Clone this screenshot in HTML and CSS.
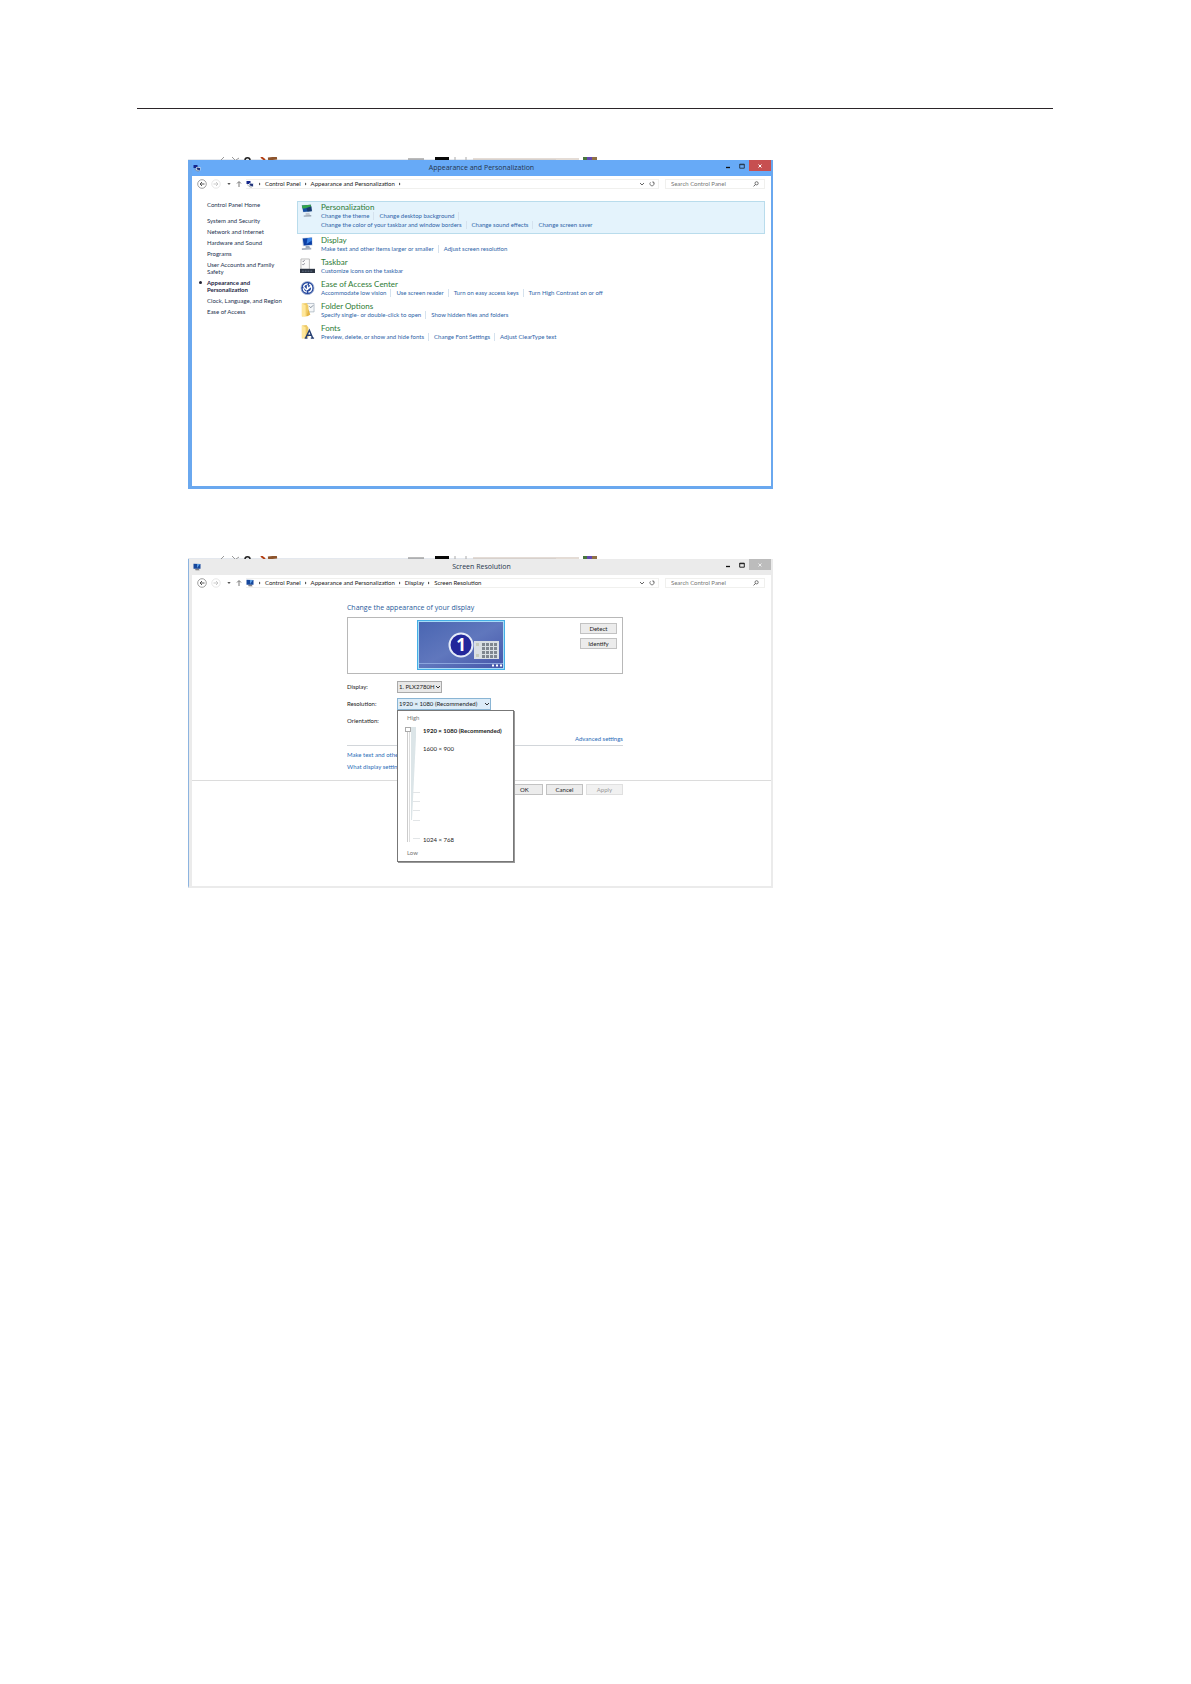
FILE: index.html
```html
<!DOCTYPE html>
<html lang="en">
<head>
<meta charset="utf-8">
<title>Display settings guide</title>
<link rel="stylesheet" href="styles.css">
</head>
<body>
<svg class="sprite" aria-hidden="true">
  <symbol id="back" viewBox="0 0 10 10"><circle cx="5" cy="5" r="4.3" fill="#fff" stroke="#888" stroke-width=".8"/><path d="M7.500 5H3M5 3L3 5l2 2" fill="none" stroke="#555" stroke-width="1"/></symbol>
  <symbol id="forward" viewBox="0 0 10 10"><circle cx="5" cy="5" r="4.2" fill="#fff" stroke="#ddd" stroke-width=".7"/><path d="M2.500 5H7M5 3l2 2-2 2" fill="none" stroke="#bbb" stroke-width=".8"/></symbol>
  <symbol id="caret" viewBox="0 0 4 4"><path d="M.3 1h3.400L2 3z" fill="#555"/></symbol>
  <symbol id="up" viewBox="0 0 6 8"><path d="M3 7V2M1 3.500l2-2 2 2" fill="none" stroke="#666" stroke-width=".9"/></symbol>
  <symbol id="chevron" viewBox="0 0 4 6"><path d="M1 1.500l1.500 1.500L1 4.500z" fill="#444"/></symbol>
  <symbol id="down" viewBox="0 0 6 6"><path d="M1 2l2 2 2-2" fill="none" stroke="#666" stroke-width="1"/></symbol>
  <symbol id="refresh" viewBox="0 0 6 6"><path d="M4.500 1.300a2.100 2.100 0 1 1-3 0M3.200 1h1.600v1.600" fill="none" stroke="#666" stroke-width=".8"/></symbol>
  <symbol id="search" viewBox="0 0 6 6"><circle cx="3.600" cy="2.300" r="1.600" fill="none" stroke="#555" stroke-width=".8"/><path d="M2.500 3.400L.6 5.400" stroke="#555" stroke-width=".9"/></symbol>
  <symbol id="pair" viewBox="0 0 8 8"><path d="M.5 1h4v3h-4z" fill="#14278c"/><path d="M3 3h4.500v3.500H3z" fill="#ccd8e8"/><path d="M3.500 3.500l3.500.5v2.500l-3-1z" fill="#25357a"/><path d="M1 4.500l3 2.500h2" stroke="#888" stroke-width=".6" fill="none"/></symbol>
  <symbol id="monitor" viewBox="0 0 8 8"><path d="M.5.8l7 .2v4.700H.5z" fill="#16479c"/><path d="M4 1h3L4 5z" fill="#5b9ce2"/><path d="M3 5.700h3v1H2z" fill="#556"/><path d="M2.500 7h4" stroke="#888" stroke-width=".7"/></symbol>
</svg>
<main class="page">
  <hr class="rule">

  <section class="shot">
    <svg class="sliver" viewBox="0 0 585 3" preserveAspectRatio="xMinYMin slice" aria-hidden="true">
      <g id="sliver-art"><path d="M0 2.500H368" stroke="#e4e8ee" stroke-width="1"/><path d="M33 3l3-3M44 0l3 3M48 3l3-2" stroke="#999" fill="none"/><path d="M57 3c0-3 5-3 5 0" stroke="#222" stroke-width="1.500" fill="none"/><path d="M73 0l4 3" stroke="#b33e12" stroke-width="2"/><path d="M80 2l9-1" stroke="#8d542c" stroke-width="3"/><path d="M220 2h16" stroke="#777"/><path d="M247 0h14v3h-14z" fill="#080808"/><path d="M267 0v3M278 0v3" stroke="#aaa"/><path d="M285 2h106" stroke="#c9b9ac"/><path d="M395 0h4v3h-4z" fill="#48773e"/><path d="M399 0h5v3h-5z" fill="#6348b0"/><path d="M404 0h5v3h-5z" fill="#8f7146"/></g>
    </svg>
    <div class="window window-blue">
      <header class="titlebar">
        <svg class="app-icon"><use href="#pair"/></svg>
        <h2 class="title">Appearance and Personalization</h2>
        <div class="caption">
          <button class="cap" aria-label="Minimize"><svg viewBox="0 0 6 6"><path d="M1 4.500h4" stroke="#111" stroke-width="1.300"/></svg></button>
          <button class="cap" aria-label="Maximize"><svg viewBox="0 0 6 6"><path d="M.7 1.200h4.600v4H.7zM.7 1.700h4.600" stroke="#234" stroke-width=".9" fill="none"/></svg></button>
          <button class="cap close" aria-label="Close"><svg viewBox="0 0 6 6"><path d="M1.500 1.500l3 3M4.500 1.500l-3 3" stroke="#fff" stroke-width="1"/></svg></button>
        </div>
      </header>
      <div class="client">
        <div class="navbar">
          <button class="nav-btn" aria-label="Back"><svg class="round"><use href="#back"/></svg></button>
          <button class="nav-btn" aria-label="Forward"><svg class="round"><use href="#forward"/></svg></button>
          <button class="nav-btn" aria-label="Recent"><svg class="tiny"><use href="#caret"/></svg></button>
          <button class="nav-btn nav-up" aria-label="Up"><svg class="small"><use href="#up"/></svg></button>
          <nav class="address">
            <svg class="app-icon"><use href="#pair"/></svg>
            <svg class="sep"><use href="#chevron"/></svg><a href="#">Control Panel</a>
            <svg class="sep"><use href="#chevron"/></svg><a href="#">Appearance and Personalization</a>
            <svg class="sep"><use href="#chevron"/></svg>
            <span class="address-end"><svg class="glyph"><use href="#down"/></svg><svg class="glyph"><use href="#refresh"/></svg></span>
          </nav>
          <label class="search"><input type="text" placeholder="Search Control Panel" aria-label="Search Control Panel"><svg class="glyph"><use href="#search"/></svg></label>
        </div>
        <div class="panel">
          <nav class="side">
            <a class="home" href="#">Control Panel Home</a>
            <a href="#">System and Security</a>
            <a href="#">Network and Internet</a>
            <a href="#">Hardware and Sound</a>
            <a href="#">Programs</a>
            <a href="#">User Accounts and Family<br>Safety</a>
            <a class="current" href="#">Appearance and<br>Personalization</a>
            <a href="#">Clock, Language, and Region</a>
            <a href="#">Ease of Access</a>
          </nav>
          <div class="categories">
            <section class="category featured">
              <svg class="cat-icon" viewBox="0 0 16 16"><path d="M1 1.500l11-1 1.500 8.500L3 10z" fill="#dce6ee"/><path d="M2 2l9.500-.8 1.200 7L3.500 9z" fill="#164fa3"/><path d="M2 2l9.500-.8.5 3C8 3 7 6 2.500 5z" fill="#35a64a"/><path d="M7 5l5-2 .5 5L8 8.500z" fill="#183c6c"/><path d="M6 10h4l1 3H6z" fill="#c2c9d2"/><path d="M4 13.500l8-.5" stroke="#9ba7b5" stroke-width="1.500"/></svg>
              <div><h3><a href="#">Personalization</a></h3>
                <ul class="tasks"><li><a href="#">Change the theme</a></li><li><a href="#">Change desktop background</a></li><li></li></ul>
                <ul class="tasks"><li><a href="#">Change the color of your taskbar and window borders</a></li><li><a href="#">Change sound effects</a></li><li><a href="#">Change screen saver</a></li></ul></div>
            </section>
            <section class="category">
              <svg class="cat-icon" viewBox="0 0 16 16"><path d="M2 1.500l11-1 .5 9L3 10.500z" fill="#cad6e5"/><path d="M3 2l9.500-.8.3 7.600L4 9.500z" fill="#0b3fa5"/><path d="M8 1.600l4.500-.4.2 3L7 8z" fill="#3a83e6"/><path d="M6 10h4l1 3H6z" fill="#9eaaba"/><path d="M2 13.500l10-.5" stroke="#a5b0bf" stroke-width="2"/></svg>
              <div><h3><a href="#">Display</a></h3>
                <ul class="tasks"><li><a href="#">Make text and other items larger or smaller</a></li><li><a href="#">Adjust screen resolution</a></li></ul></div>
            </section>
            <section class="category">
              <svg class="cat-icon" viewBox="0 0 16 16"><path d="M1 .5h9v11H1z" fill="#fafafa" stroke="#aaa" stroke-width=".8"/><path d="M2.500 2.500l1 1 1.500-2M2.500 6l1 1 1.500-2" stroke="#667" stroke-width=".7" fill="none"/><path d="M0 11h16v4.500H0z" fill="#2b3443"/><path d="M2 13.500h12" stroke="#67788f" stroke-width="1" stroke-dasharray="2 1"/></svg>
              <div><h3><a href="#">Taskbar</a></h3>
                <ul class="tasks"><li><a href="#">Customize icons on the taskbar</a></li></ul></div>
            </section>
            <section class="category">
              <svg class="cat-icon" viewBox="0 0 16 16"><circle cx="8" cy="8" r="7" fill="#24479e" stroke="#acb9d6" stroke-width=".8"/><circle cx="8" cy="8" r="4.500" fill="none" stroke="#fff" stroke-width="1.400" stroke-dasharray="6 1.500"/><path d="M4 7l3 3 5-4M8 5v5" fill="none" stroke="#fff" stroke-width="1.500"/></svg>
              <div><h3><a href="#">Ease of Access Center</a></h3>
                <ul class="tasks"><li><a href="#">Accommodate low vision</a></li><li><a href="#">Use screen reader</a></li><li><a href="#">Turn on easy access keys</a></li><li><a href="#">Turn High Contrast on or off</a></li></ul></div>
            </section>
            <section class="category">
              <svg class="cat-icon" viewBox="0 0 16 16"><path d="M7 1h8v9H7z" fill="#f5f7f9" stroke="#9ba9b6" stroke-width=".7"/><path d="M10 4l1.500 1.500L14 3" stroke="#567" stroke-width=".8" fill="none"/><path d="M2 1l5-.5 2 3v11L2 15z" fill="#f0cc67"/><path d="M2 1l4 2v12.500L2 14z" fill="#ffe79b"/><path d="M9 7l2 6-4 2z" fill="#e3b446"/></svg>
              <div><h3><a href="#">Folder Options</a></h3>
                <ul class="tasks"><li><a href="#">Specify single- or double-click to open</a></li><li><a href="#">Show hidden files and folders</a></li></ul></div>
            </section>
            <section class="category">
              <svg class="cat-icon" viewBox="0 0 16 16"><path d="M2 1l5-.5 2 3v10L2 15z" fill="#edca67"/><path d="M2 1l4 2v12.500L2 14z" fill="#ffe79b"/><path d="M6 14.500L10 6l3.500 8.500M7.500 11.500h5M5 14.500h3M11.500 14.500H15" fill="none" stroke="#243d70" stroke-width="1.500"/></svg>
              <div><h3><a href="#">Fonts</a></h3>
                <ul class="tasks"><li><a href="#">Preview, delete, or show and hide fonts</a></li><li><a href="#">Change Font Settings</a></li><li><a href="#">Adjust ClearType text</a></li></ul></div>
            </section>
          </div>
        </div>
      </div>
    </div>
  </section>

  <section class="shot">
    <svg class="sliver" viewBox="0 0 585 3" preserveAspectRatio="xMinYMin slice" aria-hidden="true"><use href="#sliver-art"/></svg>
    <div class="window window-gray">
      <header class="titlebar">
        <svg class="app-icon"><use href="#monitor"/></svg>
        <h2 class="title">Screen Resolution</h2>
        <div class="caption">
          <button class="cap" aria-label="Minimize"><svg viewBox="0 0 6 6"><path d="M1 4.500h4" stroke="#111" stroke-width="1.300"/></svg></button>
          <button class="cap" aria-label="Maximize"><svg viewBox="0 0 6 6"><path d="M.7 1.200h4.600v4H.7zM.7 1.700h4.600" stroke="#111" stroke-width=".9" fill="none"/></svg></button>
          <button class="cap close" aria-label="Close"><svg viewBox="0 0 6 6"><path d="M1.500 1.500l3 3M4.500 1.500l-3 3" stroke="#eee" stroke-width="1"/></svg></button>
        </div>
      </header>
      <div class="client">
        <div class="navbar">
          <button class="nav-btn" aria-label="Back"><svg class="round"><use href="#back"/></svg></button>
          <button class="nav-btn" aria-label="Forward"><svg class="round"><use href="#forward"/></svg></button>
          <button class="nav-btn" aria-label="Recent"><svg class="tiny"><use href="#caret"/></svg></button>
          <button class="nav-btn nav-up" aria-label="Up"><svg class="small"><use href="#up"/></svg></button>
          <nav class="address">
            <svg class="app-icon"><use href="#monitor"/></svg>
            <svg class="sep"><use href="#chevron"/></svg><a href="#">Control Panel</a>
            <svg class="sep"><use href="#chevron"/></svg><a href="#">Appearance and Personalization</a>
            <svg class="sep"><use href="#chevron"/></svg><a href="#">Display</a>
            <svg class="sep"><use href="#chevron"/></svg><a href="#">Screen Resolution</a>
            <span class="address-end"><svg class="glyph"><use href="#down"/></svg><svg class="glyph"><use href="#refresh"/></svg></span>
          </nav>
          <label class="search"><input type="text" placeholder="Search Control Panel" aria-label="Search Control Panel"><svg class="glyph"><use href="#search"/></svg></label>
        </div>
        <div class="settings">
          <h3 class="settings-title">Change the appearance of your display</h3>
          <div class="preview">
            <svg class="screen" viewBox="0 0 88 50" role="img" aria-label="Display 1">
              <defs><linearGradient id="sky" x2="1" y2="1"><stop offset="0" stop-color="#4a66b2"/><stop offset=".5" stop-color="#6077bd"/><stop offset="1" stop-color="#4556aa"/></linearGradient></defs>
              <path d="M0 0h88v50H0z" fill="#45aee6"/><path d="M1 1h86v48H1z" fill="#a7dcf7"/><path d="M2 2h84v46H2z" fill="url(#sky)"/><path d="M2 43.500h84" stroke="#8ba5dd"/><path d="M75 45.500h10" stroke="#fff" stroke-width="2" stroke-dasharray="2 2"/>
              <circle cx="44" cy="25" r="11.500" fill="#23279b" stroke="#e4ebf8" stroke-width="2"/><text x="44" y="31" text-anchor="middle" class="screen-number">1</text>
              <path d="M57 21h25v18H57z" fill="#d9dfe4"/><path d="M59 23h3v3h-3zM59 34h3v3h-3z" fill="#c5cbbd"/><path d="M65 24.500h15M65 28.500h15M65 32.500h15M65 36.500h15" stroke="#7f8790" stroke-width="3" stroke-dasharray="3 1"/>
            </svg>
            <div class="preview-actions"><button class="btn">Detect</button><button class="btn">Identify</button></div>
          </div>
          <div class="field"><label for="display">Display:</label><select id="display" class="select select-short"><option>1. PLX2780H</option></select></div>
          <div class="field"><label for="resolution">Resolution:</label>
            <div class="combo"><select id="resolution" class="select select-open"><option>1920 × 1080 (Recommended)</option></select>
              <div class="popup">
                <span class="bound">High</span>
                <div class="scale">
                  <input class="slider" type="range" min="0" max="10" value="10" aria-label="Screen resolution">
                  <svg class="ticks" viewBox="0 0 10 114" aria-hidden="true"><path d="M0 0h5v10L1 93H0z" fill="#dce5e8"/><path d="M2 65.500h7M2 74.500h7M2 83.500h7M2 93.500h7M2 111.500h7" stroke="#e2e5e7"/></svg>
                  <div class="stops"><strong>1920 × 1080 (Recommended)</strong><span>1600 × 900</span><span class="lowest">1024 × 768</span></div>
                </div>
                <span class="bound">Low</span>
              </div>
            </div>
          </div>
          <div class="field"><span>Orientation:</span></div>
          <a class="advanced" href="#">Advanced settings</a>
          <div class="help"><a href="#">Make text and other</a><a href="#">What display setting</a></div>
        </div>
        <footer class="actions"><div class="actions-inner"><button class="btn">OK</button><button class="btn">Cancel</button><button class="btn" disabled>Apply</button></div></footer>
      </div>
    </div>
  </section>
</main>
</body>
</html>
```
FILE: styles.css
```css
* { box-sizing: border-box; }

body {
  margin: 0;
  background: #fff;
  color: #222;
  font: 6px/8px Lato, "Open Sans", sans-serif;
}

a { color: inherit; text-decoration: none; }
h2, h3, ul { margin: 0; padding: 0; font-weight: 400; }
ul { list-style: none; }
svg { display: block; flex: none; }
button, input, select { font: inherit; color: inherit; margin: 0; padding: 0; }
.sprite { position: absolute; width: 0; height: 0; }

.page { padding: 108px 11.6% 64px 11.5%; }
.rule { margin: 0 0 48px; border: 0; border-top: 1px solid #2b2529; }

.shot { max-width: 636px; padding-left: 51px; }
.shot + .shot { margin-top: 67px; }
.sliver { width: 100%; height: 3px; overflow: hidden; }

.window { border: 0 solid; }
.window-blue { border-color: #6aa8ef; border-width: 0 2px 3px 4px; background: #67aaf7; }
.window-gray { border-color: #ebebeb; border-width: 0 2px 2px 1px; border-left-color: #8db4e0; padding-left: 3px; background: #ebebeb; }

.titlebar { display: grid; grid-template-columns: 1fr auto 1fr; height: 16px; }
.titlebar .app-icon { margin: 4px 0 0 1px; }
.title { font-family: "Open Sans", sans-serif; font-size: 7px; line-height: 16px; color: #26354c; }
.caption { display: flex; justify-content: flex-end; align-items: flex-start; }
.cap { display: grid; place-items: center; width: 14px; height: 11px; border: 0; background: none; }
.cap svg { width: 6px; height: 6px; }
.close { width: 22px; background: #c74f50; }
.window-gray .close { background: #bcbcbc; }
.app-icon { width: 8px; height: 8px; }

.client { display: flow-root; background: #fff; min-height: 310px; }
.window-gray .client { min-height: 311px; }

.navbar { display: flex; align-items: center; height: 10px; margin: 3px 6px 0 5px; }
.nav-btn { display: grid; place-items: center; border: 0; background: none; margin-right: 4px; }
.round { width: 10px; height: 10px; }
.tiny { width: 4px; height: 4px; }
.small { width: 6px; height: 8px; }
.nav-btn:nth-child(3) { margin: 0 5px 0 2px; }
.glyph { width: 6px; height: 6px; }
.address { display: flex; flex: 1; align-items: center; height: 10px; border: 1px solid #f0f0ee; border-left: 0; color: #222; white-space: nowrap; }
.sep { width: 4px; height: 6px; margin: 0 3px; }
.app-icon + .sep { margin-left: 4px; }
.address-end { display: flex; gap: 4px; margin-left: auto; padding-right: 3px; }
.search { display: flex; align-items: center; width: 100px; height: 10px; margin-left: 6px; padding: 0 5px; border: 1px solid #f0f0ee; }
.search input { flex: 1; min-width: 0; border: 0; outline: 0; background: none; height: 8px; }
.search input::placeholder { color: #777; opacity: 1; }

.panel { display: flex; padding: 12px 6px 0 15px; }
.side { display: flex; flex-direction: column; gap: 4px; width: 75px; margin-right: 15px; line-height: 7px; color: #253450; white-space: nowrap; }
.side .home { margin-bottom: 5px; }
.current { position: relative; font-weight: 700; color: #1d2544; }
.current::before { content: ""; position: absolute; left: -8px; top: 2px; width: 3px; height: 3px; border-radius: 50%; background: #223; }

.categories { flex: 1; min-width: 0; }
.category { display: flex; gap: 6px; margin-bottom: 4px; padding: 0 2px; border: 0 solid transparent; border-width: 0 1px; }
.featured { padding-bottom: 4px; margin-bottom: 1px; border: 1px solid #b9dcec; background: #e4f3fc; }
.cat-icon { width: 15px; height: 16px; margin-top: 1px; }
.category h3 { font-size: 8px; line-height: 10px; color: #2e7b35; }
.tasks { display: flex; color: #2d63a8; white-space: nowrap; }
.tasks + .tasks { margin-top: 1px; }
.tasks li + li { margin-left: 4px; padding-left: 5px; border-left: 1px solid #d5e2ee; }

.settings { width: 276px; margin: 15px auto 0 155px; }
.settings-title { font-family: "Open Sans", sans-serif; font-size: 7px; line-height: 10px; color: #2a5b9c; }
.preview { display: grid; grid-template-columns: 64px auto 1fr; height: 57px; margin: 4px 0 7px; padding: 2px 5px; border: 1px solid #b8b8b8; }
.screen { width: 88px; height: 50px; }
.preview::before { content: ""; }
.screen-number { font: 700 17px "Open Sans", sans-serif; fill: #fff; }
.preview-actions { display: flex; flex-direction: column; align-items: flex-end; gap: 4px; padding-top: 3px; }
.btn { width: 37px; height: 11px; border: 1px solid #c2c2c2; background: #ececec; line-height: 8px; text-align: center; }
.btn:disabled { border-color: #e0e0e0; background: #f1f1f1; color: #999; }

.field { display: flex; align-items: center; height: 12px; margin-bottom: 5px; }
.field > :first-child { width: 50px; }
.select {
  display: block; height: 12px; padding: 0 0 0 1px; border: 1px solid #aaa; border-radius: 0; appearance: none;
  background: #e8e8e8 url("data:image/svg+xml,%3Csvg xmlns='http://www.w3.org/2000/svg' viewBox='0 0 6 6'%3E%3Cpath d='M1 2l2 2 2-2' fill='none' stroke='%23333'/%3E%3C/svg%3E") right 0 center / 6px 6px no-repeat;
}
.select-short { width: 45px; }
.select-open { width: 94px; border-color: #8ab5d4; background-color: #dcecf8; }
.combo { position: relative; }
.popup { position: absolute; z-index: 1; top: 12px; left: 0; width: 117px; padding: 3px 7px 4px; border: 1px solid #777; background: #fff; box-shadow: 1px 1px #999; }
.bound { display: block; margin-left: 2px; color: #777; }
.scale { display: flex; height: 117px; margin: 5px 0; }
.slider { width: 6px; height: 115px; writing-mode: vertical-lr; direction: rtl; appearance: none; background: linear-gradient(90deg, transparent 2px, #ccc 2px 3px, #fff 3px 4px, #ddd 4px 5px, transparent 5px); }
.slider::-webkit-slider-thumb { appearance: none; width: 6px; height: 5px; border: 1px solid #aaa; background: #fff; }
.ticks { width: 10px; height: 114px; }
.stops { display: flex; flex-direction: column; flex: 1; margin-left: 2px; white-space: nowrap; }
.stops strong { margin-bottom: 10px; }
.lowest { margin-top: auto; }
.advanced { display: block; margin-top: 8px; line-height: 8px; text-align: right; color: #2a6cb8; }
.help { display: flex; flex-direction: column; gap: 4px; margin-top: 2px; padding: 5px 0 9px; border-top: 1px solid #d2d6da; color: #2a6cb8; }
.actions { border-top: 1px solid #dcdcdc; padding-top: 3px; }
.actions-inner { display: flex; justify-content: flex-end; gap: 3px; width: 276px; margin-left: 155px; }
```
